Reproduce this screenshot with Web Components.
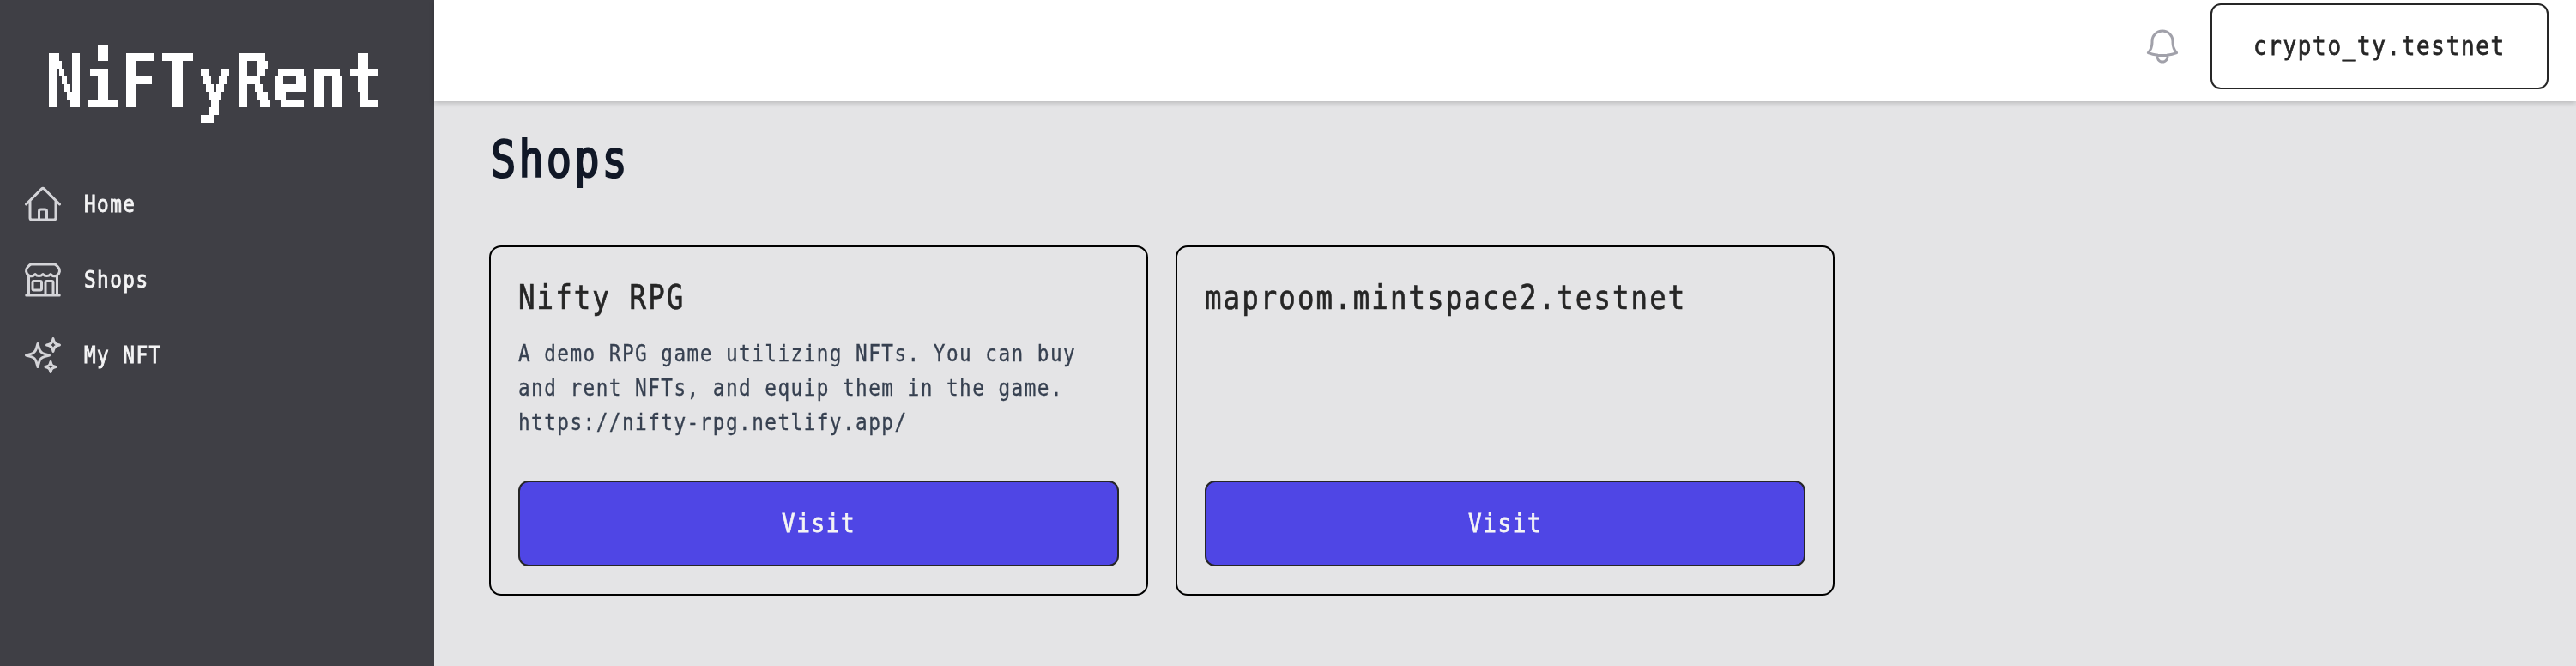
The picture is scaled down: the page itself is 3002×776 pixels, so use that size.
<!DOCTYPE html>
<html lang="en"><head><meta charset="utf-8"><title>NiFTyRent</title>
<style>
html,body{margin:0;height:100%}
body{font-family:"DejaVu Sans Mono","Liberation Mono",monospace;background:#e4e4e6;overflow:hidden}
</style></head><body>
<nifty-app>
  <nifty-sidebar slot="side">
    <nav-item icon="home">Home</nav-item>
    <nav-item icon="shop">Shops</nav-item>
    <nav-item icon="spark">My NFT</nav-item>
  </nifty-sidebar>
  <nifty-header slot="top">crypto_ty.testnet</nifty-header>
  <shop-card heading="Nifty RPG">
    <mono-text>A demo RPG game utilizing NFTs. You can buy</mono-text>
    <mono-text>and rent NFTs, and equip them in the game.</mono-text>
    <mono-text>https://nifty-rpg.netlify.app/</mono-text>
  </shop-card>
  <shop-card heading="maproom.mintspace2.testnet"></shop-card>
</nifty-app>
<script>
const define=(name,html,init)=>customElements.define(name,class extends HTMLElement{
  constructor(){super();this.attachShadow({mode:'open'});}
  connectedCallback(){if(this.ready)return;this.ready=true;this.shadowRoot.innerHTML=typeof html==='function'?html(this):html;if(init)init(this);}
});

/* Narrow monospaced run: each character advances .54em */
define('mono-text',el=>`<style>
:host{display:block;white-space:pre;width:${(el.textContent.trim().length*.54).toFixed(2)}em}
span{display:block;width:max-content;font-size:.965em;letter-spacing:.0642em;transform:scaleX(.84);transform-origin:0 50%;-webkit-text-stroke:var(--weight,.35px) currentColor}
</style><span><slot></slot></span>`);

const icons={
home:'<path d="m2.25 12 8.954-8.955c.44-.439 1.152-.439 1.591 0L21.75 12M4.5 9.75v10.125c0 .621.504 1.125 1.125 1.125H9.75v-4.875c0-.621.504-1.125 1.125-1.125h2.25c.621 0 1.125.504 1.125 1.125V21h4.125c.621 0 1.125-.504 1.125-1.125V9.75M8.25 21h8.25"/>',
shop:'<path d="M13.5 21v-7.5a.75.75 0 0 1 .75-.75h3a.75.75 0 0 1 .75.75V21m-4.5 0H2.36m11.14 0H18m0 0h3.64m-1.39 0V9.349M3.75 21V9.349m0 0a3.001 3.001 0 0 0 3.75-.615A2.993 2.993 0 0 0 9.75 9.75c.896 0 1.7-.393 2.25-1.016a2.993 2.993 0 0 0 2.25 1.016c.896 0 1.7-.393 2.25-1.015a3.001 3.001 0 0 0 3.75.614m-16.5 0a3.004 3.004 0 0 1-.621-4.72l1.189-1.19A1.5 1.5 0 0 1 5.378 3h13.243a1.5 1.5 0 0 1 1.06.44l1.19 1.189a3 3 0 0 1-.621 4.72M6.75 18h3.75a.75.75 0 0 0 .75-.75V13.5a.75.75 0 0 0-.75-.75H6.75a.75.75 0 0 0-.75.75v3.75c0 .414.336.75.75.75Z"/>',
spark:'<path d="M9.813 15.904 9 18.75l-.813-2.846a4.5 4.5 0 0 0-3.09-3.09L2.25 12l2.846-.813a4.5 4.5 0 0 0 3.09-3.09L9 5.25l.813 2.846a4.5 4.5 0 0 0 3.09 3.09L15.75 12l-2.846.813a4.5 4.5 0 0 0-3.09 3.09ZM18.259 8.715 18 9.75l-.259-1.035a3.375 3.375 0 0 0-2.455-2.456L14.25 6l1.036-.259a3.375 3.375 0 0 0 2.455-2.456L18 2.25l.259 1.035a3.375 3.375 0 0 0 2.456 2.456L21.75 6l-1.035.259a3.375 3.375 0 0 0-2.456 2.456ZM16.894 20.567 16.5 21.75l-.394-1.183a2.25 2.25 0 0 0-1.423-1.423L13.5 18.75l1.183-.394a2.25 2.25 0 0 0 1.423-1.423l.394-1.183.394 1.183a2.25 2.25 0 0 0 1.423 1.423l1.183.394-1.183.394a2.25 2.25 0 0 0-1.423 1.423Z"/>',
bell:'<path d="M14.857 17.082a23.848 23.848 0 0 0 5.454-1.31A8.967 8.967 0 0 1 18 9.75V9A6 6 0 0 0 6 9v.75a8.967 8.967 0 0 1-2.312 6.022c1.733.64 3.56 1.085 5.455 1.31m5.714 0a24.255 24.255 0 0 1-5.714 0m5.714 0a3 3 0 1 1-5.714 0"/>'};
define('ui-icon',el=>`<style>:host{display:block;width:48px;height:48px;flex:none}svg{display:block;fill:none;stroke:currentColor;stroke-width:1.5;stroke-linecap:round;stroke-linejoin:round}</style>
<svg width="48" height="48" viewBox="0 0 24 24">${icons[el.getAttribute('name')]}</svg>`);

define('nav-item',el=>`<style>:host{display:flex;align-items:center;gap:24px;height:88px;padding-left:26px;color:#f4f4f5;font-size:28px;line-height:40px;--weight:.9px}
ui-icon{color:#d4d4d8}</style><ui-icon name="${el.getAttribute('icon')}"></ui-icon><mono-text>${el.textContent}</mono-text>`);

/* Wordmark, sampled on a 3x9 grid to give it blocky stepped edges */
define('pixel-logo',`<style>
:host{display:block;width:396px;height:100px;color:#fff}
span{display:block;width:max-content;font-size:86px;line-height:96px;font-weight:700;letter-spacing:2.4px;transform:scaleX(.81);transform-origin:0 50%}
div{filter:url(#px);width:396px;height:100px}
svg{position:absolute;width:0;height:0}
</style><svg><filter id="px" filterUnits="userSpaceOnUse" x="0" y="0" width="396" height="104" color-interpolation-filters="sRGB">
<feFlood x="1" y="11" width="1" height="1" flood-color="#fff"/>
<feOffset x="0" y="7" width="3" height="9"/>
<feTile result="grid"/>
<feComposite in="SourceGraphic" in2="grid" operator="in"/>
<feComponentTransfer><feFuncA type="discrete" tableValues="0 1"/></feComponentTransfer>
<feMorphology operator="dilate" radius="1 4"/>
</filter></svg><div><span>NiFTyRent</span></div>`);

define('nifty-sidebar',`<style>:host{display:block;width:506px;height:100%;background:#3f3f45}
header{height:194px;box-sizing:border-box;padding:46px 0 0 54px}</style><header><pixel-logo></pixel-logo></header><nav><slot></slot></nav>`);

define('ui-button',`<style>:host{display:flex;align-items:center;justify-content:center;box-sizing:border-box;height:100px;border:2px solid #262626;border-radius:12px;padding-bottom:2px;font-size:32px;line-height:48px;--weight:.8px}</style><slot></slot>`);

define('nifty-header',el=>`<style>:host{display:flex;height:118px;box-sizing:border-box;padding:4px 32px 0;justify-content:flex-end;align-items:flex-start;gap:32px;background:#fff;box-shadow:0 2px 6px rgba(0,0,0,.2);position:relative;color:#262626}
ui-icon{margin-top:26px;color:#a1a1aa}ui-button{width:394px}</style><ui-icon name="bell"></ui-icon><ui-button><mono-text>${el.textContent}</mono-text></ui-button>`);

define('shop-card',el=>`<style>:host{display:flex;flex-direction:column;box-sizing:border-box;width:768px;height:408px;border:2px solid #000;border-radius:14px;padding:32px;color:#374151;font-size:28px;line-height:40px}
h2{margin:0 0 18px;font-weight:400;font-size:40px;line-height:54px;color:#262626;--weight:.7px}
ui-button{margin-top:auto;background:#4f46e5;color:#f5f5f5}</style>
<h2><mono-text>${el.getAttribute('heading')}</mono-text></h2><slot></slot><ui-button><mono-text>Visit</mono-text></ui-button>`);

define('nifty-app',`<style>:host{display:grid;grid-template:118px 1fr/506px 1fr;height:776px}
slot[name=side]{display:block;grid-row:1/3}
main{padding:32px 64px 0}
h1{margin:0 0 64px;padding-left:2px;font-weight:400;font-size:60px;line-height:72px;color:#111827;--weight:2.2px}
section{display:flex;gap:32px}</style>
<slot name="side"></slot><slot name="top"></slot><main><h1><mono-text>Shops</mono-text></h1><section><slot></slot></section></main>`);
</script></body></html>
